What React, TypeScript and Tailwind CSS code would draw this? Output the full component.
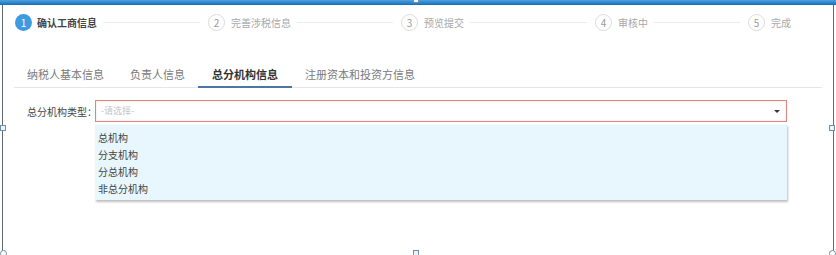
import React from 'react'

const FONT = { fontFamily: '"Microsoft YaHei", "Noto Sans CJK SC", "Noto Sans", sans-serif' }

const STEPS = [
  { n: 1, label: '确认工商信息', w: 'w-[193px]' },
  { n: 2, label: '完善涉税信息', w: 'w-[193px]' },
  { n: 3, label: '预览提交', w: 'w-[194px]' },
  { n: 4, label: '审核中', w: 'w-[153px]' },
  { n: 5, label: '完成', w: '' },
]

const TABS = ['纳税人基本信息', '负责人信息', '总分机构信息', '注册资本和投资方信息']
const OPTIONS = ['总机构', '分支机构', '分总机构', '非总分机构']

function Step({ n, label, w, last }: { n: number; label: string; w: string; last: boolean }) {
  const active = n === 1
  return (
    <div className={`flex items-center shrink-0 ${w}`}>
      <div
        className={
          active
            ? 'w-[17px] h-[17px] rounded-full bg-[#3d9be0] text-white text-[10px] flex items-center justify-center shrink-0'
            : 'w-[17px] h-[17px] rounded-full border border-[#dcdcdc] text-[#9a9a9a] text-[10px] flex items-center justify-center shrink-0'
        }
      >
        {n}
      </div>
      <span
        className={
          active
            ? 'ml-[5px] text-[10px] font-bold text-[#444] whitespace-nowrap'
            : 'ml-[6px] text-[10px] text-[#a8a8a8] whitespace-nowrap'
        }
      >
        {label}
      </span>
      {!last && <div className="flex-1 h-px bg-[#ececec] ml-[6px] mr-[8px]" />}
    </div>
  )
}

function Handle({ className }: { className: string }) {
  return <div className={`absolute w-[6px] h-[6px] bg-[#eaf4fb] border border-[#6f8ea8] ${className}`} />
}

export default function App() {
  return (
    <div className="relative w-[836px] h-[255px] bg-white overflow-hidden" style={FONT}>
      <div className="h-[5px] bg-gradient-to-b from-[#4aa3e2] to-[#166bb5]" />
      <div className="h-[250px] mx-[2px] border-l border-r border-[#5f6a72] flex flex-col">
        {/* steps */}
        <div className="flex items-center pl-[12px] pt-[6px] h-[28px]">
          {STEPS.map((s, i) => (
            <Step key={s.n} {...s} last={i === STEPS.length - 1} />
          ))}
        </div>

        {/* tabs */}
        <div className="mt-[34px] mx-[11px] flex border-b border-[#e6e6e6] h-[21px]">
          {TABS.map((t, i) => (
            <div
              key={t}
              className={
                i === 2
                  ? 'px-[14px] text-[11px] font-bold text-[#333] border-b-2 border-[#4b77a8] -mb-px leading-[14px]'
                  : 'px-[13px] text-[11px] text-[#7a7a7a] leading-[14px]'
              }
            >
              {t}
            </div>
          ))}
        </div>

        {/* form row */}
        <div className="mt-[12px] flex pl-[24px] pr-[46px]">
          <div className="w-[68px] shrink-0 text-[10px] text-[#444] h-[22px] flex items-center whitespace-nowrap">
            总分机构类型：
          </div>
          <div className="flex-1 flex flex-col">
            <div className="h-[22px] border border-[#e08585] flex items-center justify-between pl-[5px] pr-[6px] shadow-[inset_0_0_2px_rgba(224,133,133,0.35)]">
              <span className="text-[9px] text-[#c4c4c4]">-请选择-</span>
              <span className="w-0 h-0 border-l-[3px] border-r-[3px] border-t-[3px] border-l-transparent border-r-transparent border-t-[#333]" />
            </div>
            <div className="mt-[2px] h-[76px] bg-[#e8f6fd] shadow-[1px_2px_2px_rgba(0,0,0,0.25)] pt-[4px] pl-[3px] border-t border-[#f4fbff]">
              {OPTIONS.map((o) => (
                <div key={o} className="h-[17px] flex items-center text-[10px] text-[#444]">
                  {o}
                </div>
              ))}
            </div>
          </div>
        </div>
      </div>

      {/* selection handles */}
      <Handle className="left-0 top-[125px]" />
      <Handle className="left-[829px] top-[125px]" />
      <Handle className="left-[413px] top-[250px]" />
      <Handle className="left-[413px] -top-[3px]" />
      <div className="absolute left-0 top-[250px] w-[7px] h-[7px] rounded-full bg-white border border-[#6f8ea8]" />
      <div className="absolute left-[829px] top-[250px] w-[7px] h-[7px] rounded-full bg-white border border-[#6f8ea8]" />
    </div>
  )
}
